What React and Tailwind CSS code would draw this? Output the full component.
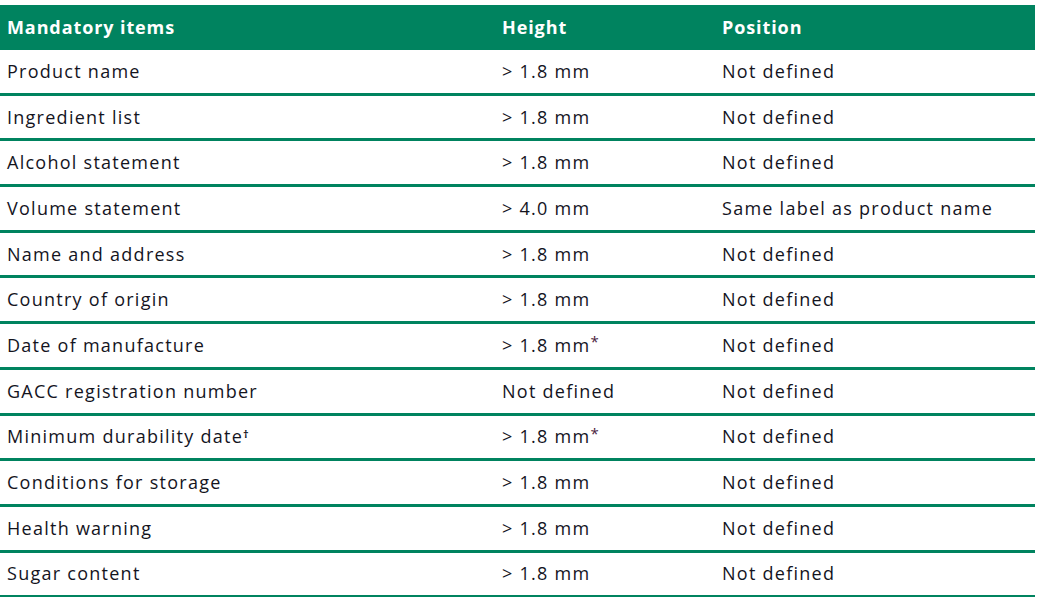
import React from 'react';

const rows = [
  { item: 'Product name', height: '> 1.8 mm', position: 'Not defined' },
  { item: 'Ingredient list', height: '> 1.8 mm', position: 'Not defined' },
  { item: 'Alcohol statement', height: '> 1.8 mm', position: 'Not defined' },
  { item: 'Volume statement', height: '> 4.0 mm', position: 'Same label as product name' },
  { item: 'Name and address', height: '> 1.8 mm', position: 'Not defined' },
  { item: 'Country of origin', height: '> 1.8 mm', position: 'Not defined' },
  { item: 'Date of manufacture', height: '> 1.8 mm', star: true, position: 'Not defined' },
  { item: 'GACC registration number', height: 'Not defined', position: 'Not defined' },
  { item: 'Minimum durability date', dagger: true, height: '> 1.8 mm', star: true, position: 'Not defined' },
  { item: 'Conditions for storage', height: '> 1.8 mm', position: 'Not defined' },
  { item: 'Health warning', height: '> 1.8 mm', position: 'Not defined' },
  { item: 'Sugar content', height: '> 1.8 mm', position: 'Not defined' },
];

export default function App() {
  return (
    <div className="bg-white w-[1037px] h-[597px] overflow-hidden pt-[5px] font-['Open_Sans',sans-serif] text-[18px] text-[#14141e]">
      <div className="w-[1035px]">
        {/* Header */}
        <div className="grid grid-cols-[495px_220px_1fr] h-[45px] items-center bg-[#00835f] text-white font-bold tracking-[0.05em]">
          <div className="pl-[7px]">Mandatory items</div>
          <div className="pl-[7px]">Height</div>
          <div className="pl-[7px]">Position</div>
        </div>

        {rows.map((r, i) => (
          <div
            key={i}
            className="grid grid-cols-[495px_220px_1fr] h-[45.7px] items-center border-b-[3px] border-[#00835f] tracking-[0.07em]"
          >
            <div className="pl-[7px]">
              {r.item}
              {r.dagger && <sup className="text-[11px] font-bold">†</sup>}
            </div>
            <div className="pl-[7px]">
              {r.height}
              {r.star && <sup className="text-[15px] text-[#4a2140] top-[-0.3em]">*</sup>}
            </div>
            <div className="pl-[7px]">{r.position}</div>
          </div>
        ))}
      </div>
    </div>
  );
}
